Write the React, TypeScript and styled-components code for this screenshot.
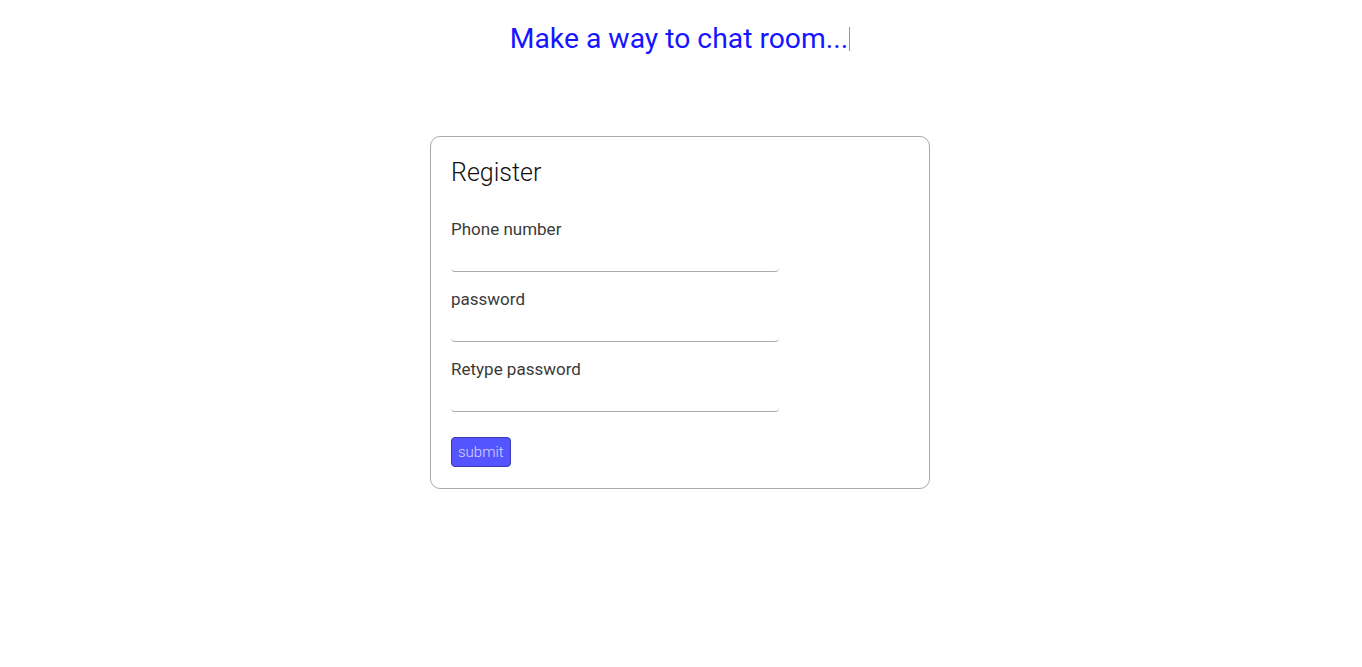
import { FC } from 'react'
import styled, { createGlobalStyle, keyframes } from 'styled-components'

const GlobalStyle = createGlobalStyle`
  body {
    margin: 0;
    background: #fff;
    font-family: Roboto, "Liberation Sans", sans-serif;
  }
`

const blink = keyframes`
  50% { border-color: transparent; }
`

const Page = styled.main`
  display: flex;
  flex-direction: column;
  align-items: center;
  padding: 27px 2px 0 0;
`

const Heading = styled.h1`
  margin: 0;
  display: inline-block;
  font-size: 28.3px;
  font-weight: 400;
  line-height: 24px;
  color: #1515ff;
  padding-right: 1px;
  border-right: 1px solid #999;
  animation: ${blink} 1s step-end infinite;
`

const Card = styled.form`
  box-sizing: border-box;
  margin-top: 85px;
  width: 500px;
  padding: 20px 20px 21px;
  border: 1px solid #aaa;
  border-radius: 10px;
  display: flex;
  flex-direction: column;
`

const Title = styled.h2`
  margin: 0 0 30px;
  font-size: 25px;
  font-weight: 300;
  line-height: 32px;
  color: #111;
`

const Field = styled.label`
  display: flex;
  flex-direction: column;
  margin-bottom: 17px;
`

const LabelText = styled.span`
  font-size: 17px;
  line-height: 20px;
  color: #3a3a3a;
  font-weight: 400;
`

const Input = styled.input`
  width: 328px;
  box-sizing: border-box;
  height: 33px;
  border: none;
  border-bottom: 1px solid #aaa;
  border-radius: 0 0 4px 4px;
  outline: none;
  font: inherit;
`

const Submit = styled.button`
  align-self: flex-start;
  margin-top: 8px;
  height: 30px;
  padding: 0 6px;
  background: #5555ff;
  border: 1px solid #3a3ab8;
  border-radius: 4px;
  color: #d8d8ff;
  font-family: inherit;
  font-size: 15px;
  font-weight: 300;
`

const fields = [
  { label: 'Phone number', type: 'tel' },
  { label: 'password', type: 'password' },
  { label: 'Retype password', type: 'password' },
]

const App: FC = () => (
  <>
    <GlobalStyle />
    <Page>
      <Heading>Make a way to chat room...</Heading>
      <Card onSubmit={(e) => e.preventDefault()}>
        <Title>Register</Title>
        {fields.map(({ label, type }) => (
          <Field key={label}>
            <LabelText>{label}</LabelText>
            <Input type={type} />
          </Field>
        ))}
        <Submit type="submit">submit</Submit>
      </Card>
    </Page>
  </>
)

export default App
